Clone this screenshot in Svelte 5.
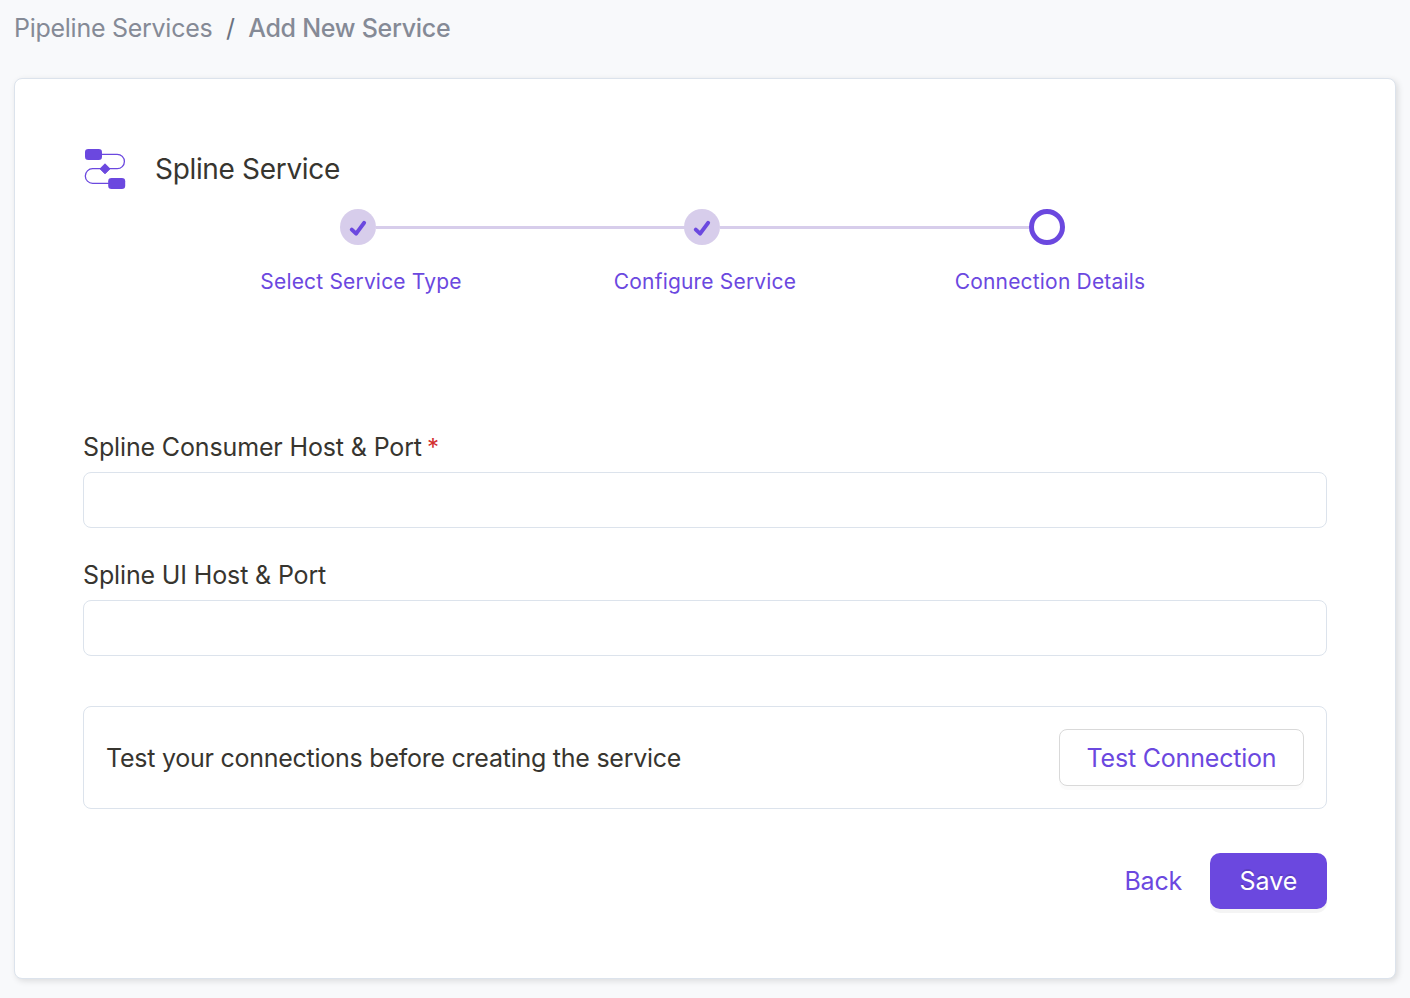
<script>
  const steps = [
    { label: 'Select Service Type', done: true },
    { label: 'Configure Service', done: true },
    { label: 'Connection Details', done: false }
  ];
  let consumerHost = $state('');
  let uiHost = $state('');
</script>

<main class="page">
  <nav class="breadcrumb">
    <a class="parent" href="#services">Pipeline Services</a>
    <span class="slash">/</span>
    <span class="current">Add New Service</span>
  </nav>

  <section class="card">
    <header class="title">
      <svg width="42" height="42" viewBox="0 0 42 42" fill="none">
        <path d="M16 6.3H33.2A7.1 7.1 0 0 1 33.2 20.7H8.6A7.2 7.2 0 0 0 8.6 35.3H25" stroke="#6b48df" stroke-width="1.3" />
        <rect x="1" y="1" width="17" height="11" rx="3.3" fill="#6b48df" />
        <rect x="24.2" y="30" width="17" height="11" rx="3.3" fill="#6b48df" />
        <path d="M21 15.8L26 20.8L21 25.8L16 20.8Z" fill="#6b48df" stroke="#6b48df" stroke-linejoin="round" />
      </svg>
      <h1>Spline Service</h1>
    </header>

    <ol class="stepper">
      {#each steps as step}
        <li class:done={step.done}>
          <span class="marker">
            {#if step.done}
              <svg width="36" height="36" viewBox="0 0 36 36" fill="none">
                <path d="M11.8 20.6L16.1 24.6L24.1 13.9" stroke="#6b48df" stroke-width="4" stroke-linecap="round" stroke-linejoin="round" />
              </svg>
            {/if}
          </span>
          <span class="label">{step.label}</span>
        </li>
      {/each}
    </ol>

    <form>
      <label for="consumer">Spline Consumer Host &amp; Port<span class="required">*</span></label>
      <input id="consumer" type="text" bind:value={consumerHost} />
      <label for="ui">Spline UI Host &amp; Port</label>
      <input id="ui" type="text" bind:value={uiHost} />

      <div class="test">
        <span class="hint">Test your connections before creating the service</span>
        <button type="button" class="outline">Test Connection</button>
      </div>

      <div class="actions">
        <button type="button" class="text">Back</button>
        <button type="button" class="primary">Save</button>
      </div>
    </form>
  </section>
</main>

<style>
  :global(body) {
    margin: 0;
    background: #f8f9fb;
  }
  .page {
    box-sizing: border-box;
    height: 998px;
    padding: 10px 14px 19px;
    display: flex;
    flex-direction: column;
    gap: 32px;
    overflow: hidden;
    font-family: Inter, sans-serif;
    font-size: 25px;
    color: #37352f;
  }
  .breadcrumb {
    display: flex;
    height: 36px;
    line-height: 37px;
    letter-spacing: -0.27px;
    color: #858a96;
  }
  .parent {
    color: inherit;
    text-decoration: none;
  }
  .slash {
    margin: 0 13.5px;
    color: #6b7280;
  }
  .current {
    font-weight: 500;
  }
  .card {
    box-sizing: border-box;
    flex: 1;
    padding: 69px 68px 0;
    background: #fff;
    border: 1px solid #dce3ec;
    border-radius: 8px;
    box-shadow: 2px 2px 6px rgba(0, 0, 0, 0.12);
  }
  .title {
    display: flex;
    align-items: center;
    gap: 29px;
    height: 42px;
    margin-left: 1px;
  }
  h1 {
    margin: 0;
    font-size: 28px;
    font-weight: 400;
    line-height: 42px;
    letter-spacing: -0.33px;
  }
  .stepper {
    display: flex;
    margin: 19px 0 0 103px;
    padding: 0;
    list-style: none;
  }
  li {
    position: relative;
    width: 344px;
    display: flex;
    flex-direction: column;
    align-items: center;
    gap: 21px;
  }
  li:last-child {
    width: 346px;
  }
  li:not(:last-child)::after {
    content: '';
    position: absolute;
    top: 17px;
    left: calc(50% + 18px);
    width: 309px;
    height: 3px;
    background: #d7cdeb;
  }
  .marker {
    box-sizing: border-box;
    width: 36px;
    height: 36px;
    border: 5px solid #6b48df;
    border-radius: 50%;
  }
  .done .marker {
    border: 0;
    background: #d7cdeb;
  }
  .marker svg {
    display: block;
  }
  .label {
    font-size: 21px;
    line-height: 32px;
    letter-spacing: 0.18px;
    margin-left: 6px;
    color: #6b48df;
    white-space: nowrap;
  }
  form {
    margin-top: 129px;
  }
  label {
    display: block;
    height: 45px;
    line-height: 41px;
    letter-spacing: -0.14px;
  }
  .required {
    margin-left: 5px;
    font-size: 24px;
    color: #d32f2f;
  }
  input {
    box-sizing: border-box;
    display: block;
    width: 100%;
    height: 56px;
    margin: 0 0 27px;
    padding: 0 16px;
    font: inherit;
    color: inherit;
    background: #fff;
    border: 1px solid #dce3ec;
    border-radius: 8px;
  }
  .test {
    box-sizing: border-box;
    display: flex;
    align-items: center;
    justify-content: space-between;
    height: 103px;
    margin-top: 50px;
    padding: 0 22px;
    border: 1px solid #dce3ec;
    border-radius: 8px;
  }
  .hint {
    letter-spacing: -0.25px;
  }
  button {
    padding: 0;
    font: inherit;
    letter-spacing: -0.2px;
    color: #6b48df;
    background: none;
    border: 0;
  }
  .outline {
    width: 245px;
    height: 57px;
    background: #fff;
    border: 1px solid #d9d9d9;
    border-radius: 8px;
    box-shadow: 0 4px 0 rgba(0, 0, 0, 0.016);
  }
  .actions {
    display: flex;
    justify-content: flex-end;
    gap: 28px;
    margin-top: 44px;
  }
  .primary {
    width: 117px;
    height: 56px;
    letter-spacing: 0;
    color: #fff;
    background: #6b48df;
    border-radius: 10px;
    box-shadow: 0 4px 0 rgba(0, 0, 0, 0.045);
    text-shadow: 0 -2px 0 rgba(0, 0, 0, 0.12);
  }
</style>
